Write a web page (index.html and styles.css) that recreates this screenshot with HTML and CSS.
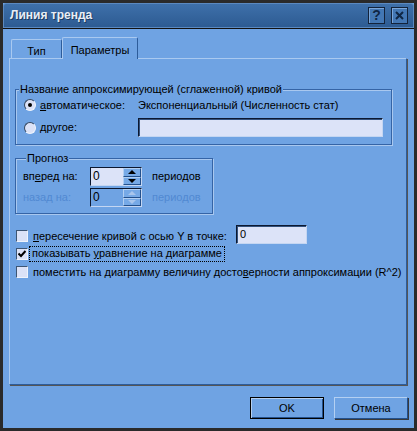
FILE: index.html
```html
<!DOCTYPE html>
<html>
  <head>
    <meta charset="utf-8" />
    <title>Линия тренда</title>
    <link rel="stylesheet" href="styles.css">
  </head>
  <body>
    <div class="window">
      <div class="titlebar">
        <span class="caption">Линия тренда</span>
        <span class="tbtn help">?</span>
        <span class="tbtn close">
          <svg width="9" height="9" viewBox="0 0 9 9"><path d="M1 1 L8 8 M8 1 L1 8" stroke="#0f2644" stroke-width="2"/></svg>
        </span>
      </div>

      <div class="client">
        <div class="tabs">
          <div class="tab">Тип</div>
          <div class="tab selected">Параметры</div>
        </div>

        <div class="panel">
          <fieldset class="group name-group">
            <legend>Название аппроксимирующей (сглаженной) кривой</legend>
            <div class="radio-row first">
              <span class="radio checked"></span>
              <span class="rlabel"><u>а</u>втоматическое:</span>
              <span>Экспоненциальный (Численность стат)</span>
            </div>
            <div class="radio-row">
              <span class="radio"></span>
              <span class="rlabel"><u>д</u>ругое:</span>
              <span class="edit wide"></span>
            </div>
          </fieldset>

          <fieldset class="group forecast">
            <legend>Прогноз</legend>
            <div class="spin-row">
              <span class="slabel">вп<u>е</u>ред на:</span>
              <span class="spin">
                <span class="spin-value">0</span>
                <span class="spin-btns">
                  <span class="sbtn"><i class="up"></i></span>
                  <span class="sbtn"><i class="down"></i></span>
                </span>
              </span>
              <span class="units">периодов</span>
            </div>
            <div class="spin-row disabled">
              <span class="slabel">назад на:</span>
              <span class="spin">
                <span class="spin-value">0</span>
                <span class="spin-btns">
                  <span class="sbtn"><i class="up"></i></span>
                  <span class="sbtn"><i class="down"></i></span>
                </span>
              </span>
              <span class="units">периодов</span>
            </div>
          </fieldset>

          <div class="checks">
            <div class="check-row">
              <span class="check"></span>
              <span class="clabel intercept"><u>п</u>ересечение кривой с осью Y в точке:</span>
              <span class="edit small">0</span>
            </div>
            <div class="check-row">
              <span class="check on">
                <svg width="8" height="8" viewBox="0 0 8 8"><path d="M0.5 3.5 L3 6 L7.5 1" stroke="#000" stroke-width="2" fill="none"/></svg>
              </span>
              <span class="clabel focus">показывать <u>у</u>равнение на диаграмме</span>
            </div>
            <div class="check-row">
              <span class="check"></span>
              <span class="clabel">поместить на диаграмму величину досто<u>в</u>ерности аппроксимации (R^2)</span>
            </div>
          </div>
        </div>

        <div class="buttons">
          <div class="button default">OK</div>
          <div class="button">Отмена</div>
        </div>
      </div>
    </div>
  </body>
</html>
```

FILE: styles.css
```css
* {
  box-sizing: border-box;
}
html, body {
  margin: 0;
}
body {
  width: 417px;
  height: 431px;
  background-color: #2a2a2a;
  color: black;
  font-family: "Liberation Sans", Tahoma, sans-serif;
  font-size: 11px;
  line-height: 13px;
}
u {
  text-decoration-thickness: 1px;
  text-underline-offset: 1px;
}
.window {
  background-color: #6fa3e3;
  border: 3px solid #2a2a2a;
  display: flex;
  flex-direction: column;
  height: 431px;
}

/* title bar */
.titlebar {
  align-items: center;
  background: linear-gradient(#3e70aa, #2d5b92);
  border: 1px solid #5b89c0;
  border-radius: 3px 3px 0 0;
  display: flex;
  flex: none;
  height: 25px;
  padding: 0 5px 0 6px;
}
.caption {
  color: #e8eef6;
  flex-grow: 1;
  font-size: 12px;
  font-weight: bold;
  text-shadow: 1px 1px 0 #1d3a60;
}
.tbtn {
  align-items: center;
  background-color: #4377b4;
  border: 1px solid #13233b;
  box-shadow: inset 1px 1px 0 #7aa6da;
  display: flex;
  height: 17px;
  justify-content: center;
  width: 17px;
}
.help {
  color: #0f2644;
  font-size: 14px;
  font-weight: bold;
  margin-right: 6px;
}
.client {
  border-top: 1px solid #111;
  display: flex;
  flex-direction: column;
  flex-grow: 1;
  padding: 8px 6px 0 6px;
}

/* tabs */
.tabs {
  align-items: flex-end;
  display: flex;
  height: 21px;
  padding-left: 2px;
}
.tab {
  border: 1px solid #a9c9f0;
  border-bottom: none;
  border-radius: 2px 2px 0 0;
  border-right-color: #2d5c9a;
  height: 19px;
  padding-top: 5px;
  text-align: center;
  width: 51px;
}
.tab.selected {
  background-color: #6fa3e3;
  height: 22px;
  margin-bottom: -1px;
  padding-top: 6px;
  position: relative;
  width: 76px;
  z-index: 1;
}

/* panel */
.panel {
  border: 1px solid #a9c9f0;
  border-bottom-color: #2d5c9a;
  border-right-color: #2d5c9a;
  box-shadow: 1px 1px 0 #555;
  height: 327px;
  margin-right: 1px;
  padding: 24px 14px 0 5px;
}
.group {
  border: 1px solid #3564a6;
  box-shadow: inset 1px 1px 0 #a9c8ef, 1px 1px 0 #a9c8ef;
  margin: 0;
  padding: 0;
}
.group legend {
  background-color: #6fa3e3;
  margin-left: 3px;
  padding: 0 1px;
}
.name-group {
  padding-bottom: 7px;
}
.radio-row {
  align-items: center;
  display: flex;
  height: 19px;
  padding-left: 8px;
}
.radio-row.first {
  height: 18px;
  margin-bottom: 4px;
}
.radio {
  background-color: #dbe2f7;
  border: 1px solid;
  border-color: #34475f #eef3fc #eef3fc #34475f;
  border-radius: 50%;
  height: 12px;
  margin-right: 4px;
  position: relative;
  width: 12px;
}
.radio.checked::after {
  background-color: black;
  border-radius: 50%;
  content: "";
  height: 4px;
  left: 3px;
  position: absolute;
  top: 3px;
  width: 4px;
}
.rlabel {
  width: 98px;
}
.edit {
  background-color: #dce3f8;
  border: 1px solid;
  border-color: #0c1830 #c4d6f2 #c4d6f2 #0c1830;
  box-shadow: inset 1px 1px 0 #33517c;
  height: 19px;
  padding: 2px 0 0 3px;
}
.edit.wide {
  width: 245px;
}
.edit.small {
  align-self: flex-start;
  margin-top: -2px;
  width: 71px;
}

/* forecast */
.forecast {
  margin-top: 7px;
  padding: 2px 0 6px 7px;
  width: 198px;
}
.spin-row {
  align-items: center;
  display: flex;
  height: 19px;
}
.spin-row + .spin-row {
  margin-top: 2px;
}
.slabel {
  width: 67px;
}
.spin {
  background-color: #dce3f8;
  border: 1px solid;
  border-color: #0c1830 #c4d6f2 #c4d6f2 #0c1830;
  display: flex;
  height: 19px;
  width: 52px;
}
.spin-value {
  flex-grow: 1;
  font-size: 12px;
  padding: 2px 0 0 2px;
}
.spin-btns {
  display: flex;
  flex-direction: column;
  width: 18px;
}
.sbtn {
  align-items: center;
  background-color: #76a9e6;
  border: 1px solid;
  border-color: #b2cff2 #23508c #23508c #b2cff2;
  display: flex;
  flex: 1;
  justify-content: center;
}
.sbtn i {
  border-left: 4px solid transparent;
  border-right: 4px solid transparent;
  height: 0;
  width: 0;
}
.sbtn .up {
  border-bottom: 4px solid black;
}
.sbtn .down {
  border-top: 4px solid black;
}
.units {
  margin-left: 10px;
}
.disabled .slabel, .disabled .units {
  color: #5189d2;
}
.disabled .spin {
  background-color: #6fa3e3;
}
.disabled .sbtn .up {
  border-bottom-color: #a9c6ec;
}
.disabled .sbtn .down {
  border-top-color: #a9c6ec;
}

/* check boxes */
.checks {
  margin: 13px -14px 0 1px;
  white-space: nowrap;
}
.check-row {
  align-items: center;
  display: flex;
  height: 18px;
}
.check {
  align-items: center;
  background-color: #dbe2f7;
  border: 1px solid;
  border-color: #3d5573 #eef3fc #eef3fc #3d5573;
  display: flex;
  flex: none;
  height: 12px;
  justify-content: center;
  margin-right: 4px;
  width: 12px;
}
.clabel {
  padding: 0 1px;
}
.clabel.intercept {
  width: 204px;
}
.clabel.focus {
  margin-left: -2px;
  outline: 1px dotted black;
  padding: 0 2px 1px 2px;
}

/* buttons */
.buttons {
  display: flex;
  gap: 10px;
  justify-content: flex-end;
  margin-top: 12px;
}
.button {
  border: 1px solid;
  border-color: #b4d0f2 #23508c #23508c #b4d0f2;
  box-shadow: 1px 1px 0 #3a3a3a;
  height: 22px;
  padding-top: 4px;
  text-align: center;
  width: 74px;
}
.button.default {
  border: 1px solid black;
  box-shadow: inset 1px 1px 0 #b4d0f2, inset -1px -1px 0 #23508c;
}
```
